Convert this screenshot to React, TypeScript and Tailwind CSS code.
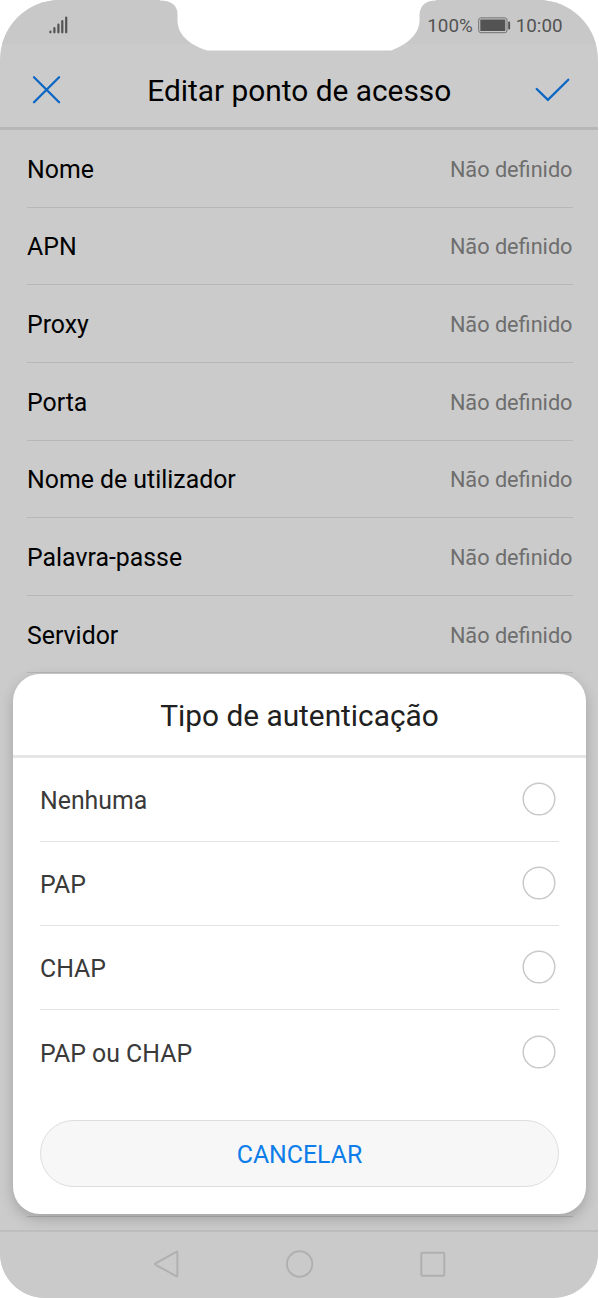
const fields = ['Nome', 'APN', 'Proxy', 'Porta', 'Nome de utilizador', 'Palavra-passe', 'Servidor'];
const options = ['Nenhuma', 'PAP', 'CHAP', 'PAP ou CHAP'];

function StatusBar() {
  return (
    <div className="flex h-[44px] shrink-0 items-start justify-between bg-[#c8c8c8] pr-[35px] pl-[49px] text-[18.8px] leading-[22px] text-[#535353]">
      <svg className="mt-[16px] h-[18px] w-[19px]" viewBox="0 0 19 18" stroke="#535353" strokeWidth="2.2" strokeLinecap="round" fill="none">
        <path d="M1.4 15.7v.6M5.4 12.2v4.1M9.4 8.7v7.6M13.3 5v11.3M17.2 1.7v14.6" />
      </svg>
      <div className="mt-[15px] flex">
        <span>100%</span>
        <svg className="mt-[2px] ml-[5px] h-[17px] w-[33px]" viewBox="0 0 33 17">
          <rect x="0.7" y="0.9" width="28.3" height="14.8" rx="2.2" fill="none" stroke="#707070" strokeWidth="1" />
          <rect x="2.3" y="2.6" width="25" height="11.5" rx="0.6" fill="#535353" />
          <rect x="30.2" y="4.6" width="1.9" height="8" rx="0.8" fill="#535353" />
        </svg>
        <span className="ml-[5px]">10:00</span>
      </div>
    </div>
  );
}

function Header() {
  return (
    <header className="flex h-[86px] shrink-0 items-center justify-between border-b-[3px] border-[#b7b7b7] pr-[26px] pl-[32px]">
      <svg className="mt-[9px] h-[30px] w-[30px]" viewBox="0 0 30 30" fill="none" stroke="#0b66c4" strokeWidth="2.3" strokeLinecap="round">
        <path d="M2 2.2 27.1 27.2M27.1 2.2 2 27.2" />
      </svg>
      <h1 className="mt-[10px] ml-px text-[29.85px] leading-[36px] text-black">Editar ponto de acesso</h1>
      <svg className="mt-[9px] h-[26px] w-[36px]" viewBox="0 0 36 26" fill="none" stroke="#0b66c4" strokeWidth="2.3" strokeLinecap="round" strokeLinejoin="miter">
        <path d="M1.7 12 12.9 22.8 33.3 2.8" />
      </svg>
    </header>
  );
}

function NavigationBar() {
  return (
    <nav className="flex h-[68px] shrink-0 items-center justify-center gap-[105px] border-t-2 border-[#bebebe] bg-[#cacaca] pb-[2px] pl-[1.5px]">
      <svg className="h-[30px] w-[28px]" viewBox="0 0 28 30" fill="none" stroke="#b0b0b0" strokeWidth="2" strokeLinejoin="round">
        <path d="M23.2 2.9q1.2-.7 1.2.6v23q0 1.3-1.2.6L2.6 15.8q-1-.7 0-1.4Z" />
      </svg>
      <svg className="h-[30px] w-[28px]" viewBox="0 0 28 30" fill="none" stroke="#b0b0b0" strokeWidth="2">
        <circle cx="13.6" cy="15" r="12.7" />
      </svg>
      <svg className="h-[30px] w-[28px]" viewBox="0 0 28 30" fill="none" stroke="#b0b0b0" strokeWidth="2">
        <rect x="2.3" y="3.7" width="23" height="23" rx="1" />
      </svg>
    </nav>
  );
}

function AuthDialog() {
  return (
    <section className="absolute top-[674px] left-[13px] flex h-[540px] w-[573px] flex-col rounded-[27px] bg-white shadow-[0_5px_14px_rgba(0,0,0,0.2)]">
      <h2 className="h-[83.5px] shrink-0 border-b-[3px] border-[#e6e6e6] pt-[24px] text-center text-[29.8px] leading-[36px] text-[#202020]">
        Tipo de autenticação
      </h2>
      <div className="mx-[27px] divide-y divide-[#e3e3e3]">
        {options.map((option) => (
          <div key={option} className="flex h-[84.2px] items-center justify-between pr-[3px]">
            <span className="pt-[3px] text-[24.85px] leading-[30px] text-[#3a3a3a]">{option}</span>
            <svg className="h-[34px] w-[34px]" viewBox="0 0 34 34" fill="none">
              <circle cx="17" cy="17" r="15.8" stroke="#c9c9c9" strokeWidth="1.5" />
            </svg>
          </div>
        ))}
      </div>
      <button className="mx-[27px] mt-[26px] h-[67px] rounded-full border border-[#dddddd] bg-[#f7f7f7] pt-[3px] text-[24.85px] leading-[30px] text-[#0d7ee9]">
        CANCELAR
      </button>
    </section>
  );
}

export default function App() {
  return (
    <div className="h-[1298px] w-[599px] bg-white font-['Roboto',sans-serif]">
      <main className="relative flex h-full w-[597.5px] flex-col overflow-hidden rounded-t-[60px] rounded-b-[45px] bg-[#cbcbcb]">
        <StatusBar />
        <Header />
        <div className="mr-[25px] ml-[27px] flex-1 overflow-hidden">
          {fields.map((field) => (
            <div key={field} className="flex h-[77.65px] items-center justify-between border-b border-[#b7b7b7] pt-[3px]">
              <span className="text-[24.85px] leading-[30px] text-black">{field}</span>
              <span className="text-[21.7px] leading-[30px] text-[#6e6e6e]">Não definido</span>
            </div>
          ))}
          <div className="h-[543.6px] border-b border-[#b0b0b0]" />
        </div>
        <NavigationBar />
        <svg className="absolute top-0 left-[160px] h-[52px] w-[280px]" viewBox="160 0 280 52" fill="#fff">
          <path d="M160 0V.4C171 .4 177.5 5 177.5 14V20C177.5 34 188 44 207 50.6H391C408 44 419.5 34 419.5 20V16C419.5 6 425 .4 436 .4V0Z" />
        </svg>
        <AuthDialog />
      </main>
    </div>
  );
}
